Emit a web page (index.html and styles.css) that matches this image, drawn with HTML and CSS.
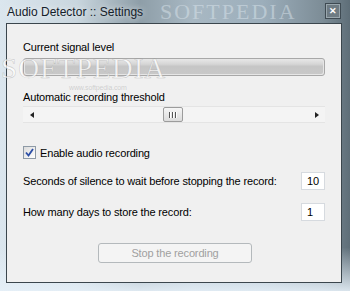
FILE: index.html
```html
<!DOCTYPE html>
<html lang="en">
<head>
  <meta charset="UTF-8" />
  <meta name="viewport" content="width=device-width, initial-scale=1" />
  <title>Audio Detector :: Settings</title>
  <link rel="stylesheet" href="styles.css">
</head>
<body>

<div class="window">
  <div class="titlebar">
    <span class="title">Audio Detector :: Settings</span>
    <span class="close-btn">&#x2715;</span>
  </div>

  <div class="client">
    <div class="label">Current signal level</div>
    <div class="progress"><div class="progress-fill"></div></div>

    <div class="label gap-label">Automatic recording threshold</div>
    <div class="scrollbar">
      <span class="arrow arrow-left"></span>
      <div class="track">
        <div class="thumb"><span></span><span></span><span></span></div>
      </div>
      <span class="arrow arrow-right"></span>
    </div>

    <label class="check-row">
      <span class="checkbox">
        <svg width="9" height="9" viewBox="0 0 9 9"><path d="M1 4.5 L3.5 7.5 L8 1" fill="none" stroke="#2b4ea6" stroke-width="1.8"/></svg>
      </span>
      Enable audio recording
    </label>

    <div class="field-row row-seconds">
      <span>Seconds of silence to wait before stopping the record:</span>
      <span class="textbox">10</span>
    </div>

    <div class="field-row row-days">
      <span>How many days to store the record:</span>
      <span class="textbox">1</span>
    </div>

    <div class="btn-wrap">
      <button class="btn" disabled>Stop the recording</button>
    </div>

    <!-- watermark over the screenshot -->
    <div class="wm-big">SOFTPEDIA</div>
    <div class="wm-small">www.softpedia.com</div>
  </div>

  <div class="wm-title">SOFTPEDIA</div>
</div>

</body>
</html>
```

FILE: styles.css
```css
body {
  margin: 0;
  font-family: 'Liberation Sans', Arial, sans-serif;
  font-size: 11px;
  letter-spacing: -0.15px;
  color: #000;
  background: #fff;
}

.window {
  position: relative;
  width: 350px;
  height: 291px;
  box-sizing: border-box;
  padding: 0 8px 8px 6px;
  overflow: hidden;
  background:
    linear-gradient(180deg, rgba(255,255,255,0) 0%, rgba(255,255,255,0) 85%, rgba(230,240,248,0.9) 100%),
    linear-gradient(90deg, #dbe6ee 0%, #c9d6de 22%, #8e9ea8 40%, #a8b8c3 55%, #9caebb 75%, #7d8d97 92%, #5e6e78 100%);
}

.titlebar {
  height: 23px;
  display: flex;
  align-items: center;
  justify-content: space-between;
  padding: 0 1px 0 1px;
  position: relative;
  z-index: 2;
}

.title {
  font-size: 12px;
  letter-spacing: 0;
  color: #14202a;
  text-shadow: 0 0 6px rgba(255,255,255,0.9);
}

.close-btn {
  width: 14px;
  height: 14px;
  margin-top: -2px;
  border: 1px solid #3e4a52;
  box-shadow: inset 0 0 0 1px #9aa7ae;
  background: #6e7b83;
  color: #fff;
  font-size: 9px;
  font-weight: bold;
  line-height: 14px;
  text-align: center;
}

.client {
  position: relative;
  height: 260px;
  box-sizing: border-box;
  border: 1px solid #3b464d;
  background: #f0f0f0;
  padding: 16px 16px 0 16px;
}

.label {
  line-height: 15px;
  height: 15px;
}

.gap-label {
  margin-top: 14px;
}

.progress {
  margin-top: 3px;
  height: 18px;
  box-sizing: border-box;
  border: 1px solid #a8a8a8;
  border-radius: 3px;
  background: #e6e6e6;
  padding: 1px;
}

.progress-fill {
  height: 100%;
  border-radius: 2px;
  background: linear-gradient(180deg, #e4e4e4 0%, #d6d6d6 30%, #c6c6c6 45%, #c8c8c8 100%);
}

.scrollbar {
  margin-top: 1px;
  height: 17px;
  display: flex;
  align-items: center;
  box-sizing: border-box;
  border-top: 1px solid #e4e4e4;
  border-bottom: 1px solid #e4e4e4;
  background: #f4f4f4;
}

.arrow {
  width: 17px;
  height: 15px;
  display: flex;
  align-items: center;
  justify-content: center;
  flex-shrink: 0;
}

.arrow-left::before,
.arrow-right::before {
  content: '';
  width: 0;
  height: 0;
  border-top: 3px solid transparent;
  border-bottom: 3px solid transparent;
}

.arrow-left::before {
  border-right: 4px solid #222;
}

.arrow-right::before {
  border-left: 4px solid #222;
}

.track {
  flex: 1;
  height: 15px;
  display: flex;
  align-items: center;
  padding-left: 123px;
}

.thumb {
  width: 20px;
  height: 15px;
  box-sizing: border-box;
  border: 1px solid #9c9c9c;
  border-radius: 2px;
  background: linear-gradient(180deg, #f6f6f6 0%, #e8e8e8 50%, #dcdcdc 100%);
  display: flex;
  align-items: center;
  justify-content: center;
  gap: 1px;
}

.thumb span {
  width: 1px;
  height: 6px;
  background: #555;
  box-shadow: 1px 0 0 #fff;
  margin-right: 1px;
}

.check-row {
  margin-top: 22px;
  height: 15px;
  display: flex;
  align-items: center;
  gap: 4px;
}

.checkbox {
  width: 13px;
  height: 13px;
  box-sizing: border-box;
  border: 1px solid #8e9aa6;
  background: linear-gradient(135deg, #dcdcdc 0%, #f4f4f4 70%, #fff 100%);
  display: flex;
  align-items: center;
  justify-content: center;
}

.field-row {
  display: flex;
  justify-content: space-between;
  align-items: center;
  height: 18px;
}

.row-seconds {
  margin-top: 12px;
}

.row-days {
  margin-top: 13px;
}

.textbox {
  width: 24px;
  height: 18px;
  box-sizing: border-box;
  border: 1px solid #d6dadf;
  background: #fff;
  padding-left: 5px;
  line-height: 16px;
}

.btn-wrap {
  margin-top: 22px;
  display: flex;
  justify-content: center;
}

.btn {
  width: 154px;
  height: 20px;
  margin-left: 2px;
  border: 1px solid #b4b9bc;
  border-radius: 3px;
  background: #f4f4f4;
  color: #a0a0a0;
  font-family: 'Liberation Sans', Arial, sans-serif;
  font-size: 11px;
  letter-spacing: -0.15px;
  padding: 0;
}

.wm-big {
  position: absolute;
  left: -6px;
  top: 28px;
  font-family: 'Liberation Serif', serif;
  font-size: 29px;
  letter-spacing: 1px;
  color: rgba(255,255,255,0.75);
  -webkit-text-stroke: 0.6px rgba(120,120,120,0.35);
  pointer-events: none;
}

.wm-small {
  position: absolute;
  left: 62px;
  top: 60px;
  font-size: 7px;
  color: rgba(140,140,140,0.35);
  pointer-events: none;
}

.wm-title {
  position: absolute;
  left: 160px;
  top: 0;
  font-family: 'Liberation Serif', serif;
  font-size: 22px;
  line-height: 23px;
  letter-spacing: 2px;
  color: rgba(225,235,242,0.45);
  pointer-events: none;
  z-index: 1;
}
```
